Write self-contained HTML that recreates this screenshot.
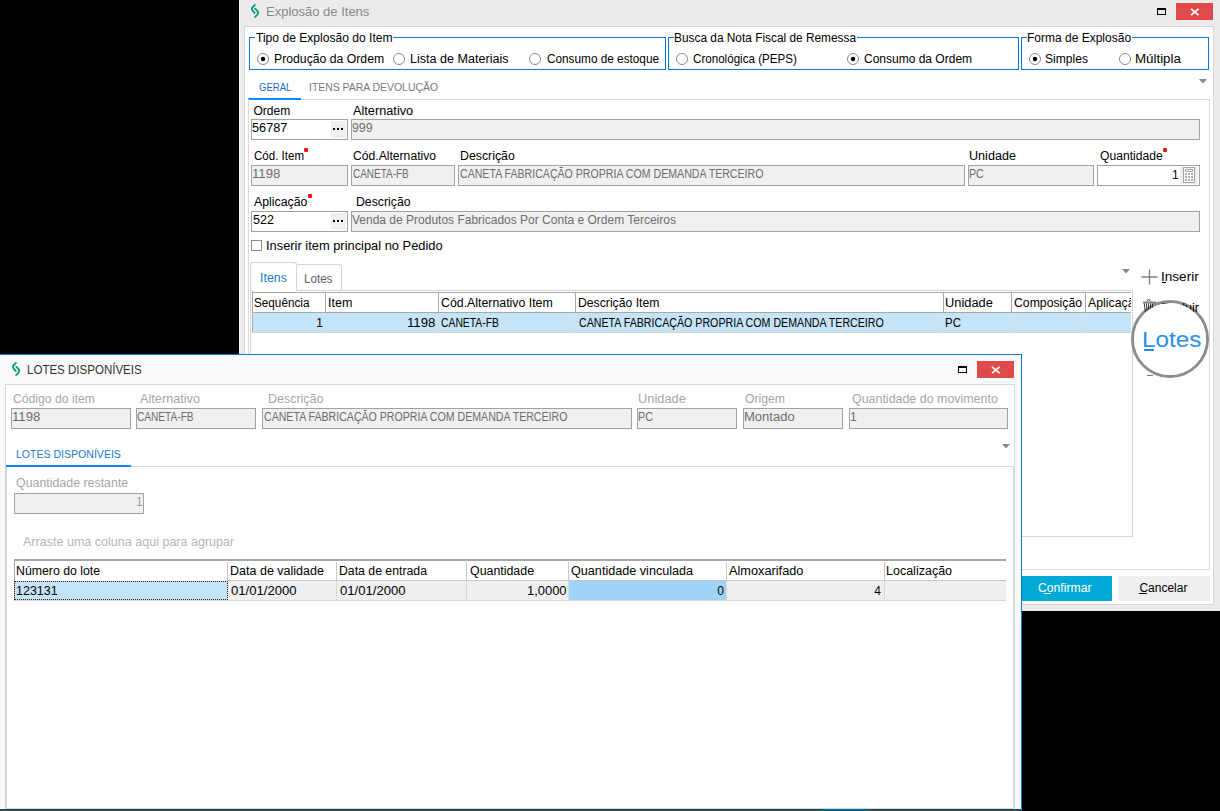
<!DOCTYPE html>
<html><head><meta charset="utf-8"><style>*{margin:0;padding:0}
html,body{width:1220px;height:811px;overflow:hidden;background:#000;position:relative}
body>div,body>svg,body>span,div>span{position:absolute}
.t{font-family:"Liberation Sans", sans-serif;white-space:nowrap;transform-origin:0 0}</style></head><body>
<div style="left:239px;top:0px;width:981px;height:611px;background:#ebebeb;"></div>
<div style="left:239px;top:0px;width:1px;height:611px;background:#f4f4f4;"></div>
<svg style="left:250px;top:3px" width="10" height="16" viewBox="0 0 10 16"><path d="M4.8 2.0 C3 3.5 1.9 4.6 1.9 6.1 C1.9 7.6 3 8.6 4.7 10.0" fill="none" stroke="#119c84" stroke-width="1.9" stroke-linecap="round"/><path d="M5.3 5.7 C7 7.1 8.2 8.2 8.2 9.8 C8.2 11.3 7 12.4 5.1 14.0" fill="none" stroke="#119c84" stroke-width="1.9" stroke-linecap="round"/></svg>
<span class="t" style="top:5px;font-size:13px;line-height:13px;color:#8a8a8a;left:266.0px;">Explosão de Itens</span>
<div style="left:1157px;top:8px;width:9px;height:7px;box-sizing:border-box;border:1.5px solid #000;border-top-width:2px;"></div>
<div style="left:1176px;top:3px;width:37px;height:17px;background:#e04a4a;"></div>
<svg style="left:1190px;top:8px" width="10" height="8" viewBox="0 0 10 8"><path d="M1 0.8 L8.6 7.2 M8.6 0.8 L1 7.2" stroke="#fff" stroke-width="1.7"/></svg>
<div style="left:244px;top:26px;width:970px;height:579px;background:#fff;box-sizing:border-box;border:1px solid #d6d6d6;"></div>
<div style="left:249px;top:37px;width:417px;height:33px;box-sizing:border-box;border:1px solid #0a78d4;"></div>
<div style="left:255px;top:33px;width:138px;height:8px;background:#fff"></div>
<span class="t" style="top:32px;font-size:12px;line-height:12px;color:#000;left:256.0px;transform:scaleX(1.007);">Tipo de Explosão do Item</span>
<div style="left:668px;top:37px;width:351px;height:33px;box-sizing:border-box;border:1px solid #0a78d4;"></div>
<div style="left:674px;top:33px;width:183px;height:8px;background:#fff"></div>
<span class="t" style="top:32px;font-size:12px;line-height:12px;color:#000;left:674.0px;transform:scaleX(0.989);">Busca da Nota Fiscal de Remessa</span>
<div style="left:1021px;top:37px;width:188px;height:33px;box-sizing:border-box;border:1px solid #0a78d4;"></div>
<div style="left:1027px;top:33px;width:105px;height:8px;background:#fff"></div>
<span class="t" style="top:32px;font-size:12px;line-height:12px;color:#000;left:1027.0px;">Forma de Explosão</span>
<svg style="left:257px;top:53px" width="12" height="12" viewBox="0 0 12 12"><circle cx="6" cy="6" r="5.5" fill="#fff" stroke="#8a8a8a" stroke-width="1"/><circle cx="6" cy="6" r="2.2" fill="#000"/></svg>
<span class="t" style="top:53px;font-size:12px;line-height:12px;color:#000;left:274.0px;transform:scaleX(1.019);">Produção da Ordem</span>
<svg style="left:393px;top:53px" width="12" height="12" viewBox="0 0 12 12"><circle cx="6" cy="6" r="5.5" fill="#fff" stroke="#8a8a8a" stroke-width="1"/></svg>
<span class="t" style="top:53px;font-size:12px;line-height:12px;color:#000;left:410.0px;transform:scaleX(1.048);">Lista de Materiais</span>
<svg style="left:529px;top:53px" width="12" height="12" viewBox="0 0 12 12"><circle cx="6" cy="6" r="5.5" fill="#fff" stroke="#8a8a8a" stroke-width="1"/></svg>
<span class="t" style="top:53px;font-size:12px;line-height:12px;color:#000;left:546.5px;transform:scaleX(0.982);">Consumo de estoque</span>
<svg style="left:676px;top:53px" width="12" height="12" viewBox="0 0 12 12"><circle cx="6" cy="6" r="5.5" fill="#fff" stroke="#8a8a8a" stroke-width="1"/></svg>
<span class="t" style="top:53px;font-size:12px;line-height:12px;color:#000;left:693.0px;transform:scaleX(0.967);">Cronológica (PEPS)</span>
<svg style="left:847px;top:53px" width="12" height="12" viewBox="0 0 12 12"><circle cx="6" cy="6" r="5.5" fill="#fff" stroke="#8a8a8a" stroke-width="1"/><circle cx="6" cy="6" r="2.2" fill="#000"/></svg>
<span class="t" style="top:53px;font-size:12px;line-height:12px;color:#000;left:864.0px;">Consumo da Ordem</span>
<svg style="left:1029px;top:53px" width="12" height="12" viewBox="0 0 12 12"><circle cx="6" cy="6" r="5.5" fill="#fff" stroke="#8a8a8a" stroke-width="1"/><circle cx="6" cy="6" r="2.2" fill="#000"/></svg>
<span class="t" style="top:53px;font-size:12px;line-height:12px;color:#000;left:1045.0px;transform:scaleX(1.007);">Simples</span>
<svg style="left:1119px;top:53px" width="12" height="12" viewBox="0 0 12 12"><circle cx="6" cy="6" r="5.5" fill="#fff" stroke="#8a8a8a" stroke-width="1"/></svg>
<span class="t" style="top:53px;font-size:12px;line-height:12px;color:#000;left:1135.4px;transform:scaleX(1.110);">Múltipla</span>
<span class="t" style="top:82px;font-size:11.5px;line-height:11.5px;color:#1a6fd0;left:258.6px;transform:scaleX(0.831);">GERAL</span>
<span class="t" style="top:82px;font-size:11px;line-height:11px;color:#7a7a7a;left:308.5px;transform:scaleX(0.948);">ITENS PARA DEVOLUÇÃO</span>
<div style="left:248px;top:99px;width:962px;height:1px;background:#d9d9d9;"></div>
<div style="left:248px;top:98px;width:53px;height:2px;background:#0a8aff;"></div>
<svg style="left:1199px;top:79px" width="8" height="5" viewBox="0 0 8 5"><path d="M0 0 H8 L4 4.5 Z" fill="#8a8a8a"/></svg>
<div style="left:248px;top:99px;width:1px;height:471px;background:#d9d9d9;"></div>
<div style="left:1209px;top:99px;width:1px;height:471px;background:#d9d9d9;"></div>
<div style="left:248px;top:569px;width:962px;height:1px;background:#d9d9d9;"></div>
<span class="t" style="top:105px;font-size:12px;line-height:12px;color:#000;left:253.5px;">Ordem</span>
<span class="t" style="top:105px;font-size:12px;line-height:12px;color:#000;left:353.3px;transform:scaleX(1.061);">Alternativo</span>
<div style="left:251px;top:119px;width:97px;height:21px;background:#ffffff;box-sizing:border-box;border:1px solid #a2a2a2;"></div>
<div style="left:331px;top:121px;width:15px;height:17px;background:#efefef;"></div>
<div style="left:333px;top:128px;width:2px;height:2px;background:#000;"></div>
<div style="left:337px;top:128px;width:2px;height:2px;background:#000;"></div>
<div style="left:341px;top:128px;width:2px;height:2px;background:#000;"></div>
<span class="t" style="top:122px;font-size:12px;line-height:12px;color:#000;left:252.4px;transform:scaleX(1.062);">56787</span>
<div style="left:351px;top:119px;width:849px;height:21px;background:#f0f0f0;box-sizing:border-box;border:1px solid #a2a2a2;"></div>
<span class="t" style="top:122px;font-size:12px;line-height:12px;color:#6d6d6d;left:352.0px;transform:scaleX(1.025);">999</span>
<span class="t" style="top:150px;font-size:12px;line-height:12px;color:#000;left:253.5px;transform:scaleX(0.962);">Cód. Item</span>
<div style="left:304px;top:148px;width:4px;height:4px;border-radius:1.2px;background:#ff0a0a"></div>
<span class="t" style="top:150px;font-size:12px;line-height:12px;color:#000;left:353.3px;transform:scaleX(1.012);">Cód.Alternativo</span>
<span class="t" style="top:150px;font-size:12px;line-height:12px;color:#000;left:459.5px;transform:scaleX(1.027);">Descrição</span>
<span class="t" style="top:150px;font-size:12px;line-height:12px;color:#000;left:969.4px;transform:scaleX(1.051);">Unidade</span>
<span class="t" style="top:150px;font-size:12px;line-height:12px;color:#000;left:1099.5px;transform:scaleX(1.011);">Quantidade</span>
<div style="left:1163px;top:147.5px;width:4px;height:4px;border-radius:1.2px;background:#ff0a0a"></div>
<div style="left:251px;top:165px;width:97px;height:21px;background:#f0f0f0;box-sizing:border-box;border:1px solid #a2a2a2;"></div>
<span class="t" style="top:168px;font-size:12px;line-height:12px;color:#6d6d6d;left:252.4px;transform:scaleX(1.100);">1198</span>
<div style="left:351px;top:165px;width:104px;height:21px;background:#f0f0f0;box-sizing:border-box;border:1px solid #a2a2a2;"></div>
<span class="t" style="top:168px;font-size:12px;line-height:12px;color:#6d6d6d;left:352.5px;transform:scaleX(0.831);">CANETA-FB</span>
<div style="left:458px;top:165px;width:507px;height:21px;background:#f0f0f0;box-sizing:border-box;border:1px solid #a2a2a2;"></div>
<span class="t" style="top:168px;font-size:12px;line-height:12px;color:#6d6d6d;left:459.7px;transform:scaleX(0.883);">CANETA FABRICAÇÃO PROPRIA COM DEMANDA TERCEIRO</span>
<div style="left:968px;top:165px;width:126px;height:21px;background:#f0f0f0;box-sizing:border-box;border:1px solid #a2a2a2;"></div>
<span class="t" style="top:168px;font-size:12px;line-height:12px;color:#6d6d6d;left:968.9px;transform:scaleX(0.887);">PC</span>
<div style="left:1097px;top:165px;width:103px;height:21px;background:#ffffff;box-sizing:border-box;border:1px solid #a2a2a2;"></div>
<span class="t" style="top:169px;font-size:12px;line-height:12px;color:#000;left:1172.0px;">1</span>
<div style="left:1180px;top:167px;width:18px;height:17px;background:#efefef;"></div>
<svg style="left:1183px;top:167px" width="12" height="16" viewBox="0 0 12 16"><rect x="0.5" y="0.5" width="11" height="15" fill="#fff" stroke="#a6a6a6"/><rect x="2.5" y="2.5" width="7" height="2" fill="none" stroke="#a6a6a6"/><g fill="#b0b0b0"><rect x="2" y="6" width="2" height="2"/><rect x="5" y="6" width="2" height="2"/><rect x="8" y="6" width="2" height="2"/><rect x="2" y="9" width="2" height="2"/><rect x="5" y="9" width="2" height="2"/><rect x="8" y="9" width="2" height="2"/><rect x="2" y="12" width="2" height="2"/><rect x="5" y="12" width="2" height="2"/><rect x="8" y="12" width="2" height="2"/></g></svg>
<span class="t" style="top:196px;font-size:12px;line-height:12px;color:#000;left:253.5px;transform:scaleX(1.025);">Aplicação</span>
<div style="left:308px;top:194px;width:4px;height:4px;border-radius:1.2px;background:#ff0a0a"></div>
<span class="t" style="top:196px;font-size:12px;line-height:12px;color:#000;left:356.0px;transform:scaleX(1.023);">Descrição</span>
<div style="left:251px;top:211px;width:97px;height:21px;background:#ffffff;box-sizing:border-box;border:1px solid #a2a2a2;"></div>
<div style="left:331px;top:213px;width:15px;height:17px;background:#efefef;"></div>
<div style="left:333px;top:220px;width:2px;height:2px;background:#000;"></div>
<div style="left:337px;top:220px;width:2px;height:2px;background:#000;"></div>
<div style="left:341px;top:220px;width:2px;height:2px;background:#000;"></div>
<span class="t" style="top:214px;font-size:12px;line-height:12px;color:#000;left:252.5px;transform:scaleX(1.042);">522</span>
<div style="left:351px;top:211px;width:849px;height:21px;background:#f0f0f0;box-sizing:border-box;border:1px solid #a2a2a2;"></div>
<span class="t" style="top:214px;font-size:12px;line-height:12px;color:#6d6d6d;left:352.0px;">Venda de Produtos Fabricados Por Conta e Ordem Terceiros</span>
<div style="left:251px;top:240px;width:11px;height:11px;background:#fff;box-sizing:border-box;border:1px solid #8a8a8a;"></div>
<span class="t" style="top:240px;font-size:12px;line-height:12px;color:#000;left:265.6px;transform:scaleX(1.072);">Inserir item principal no Pedido</span>
<div style="left:250px;top:262px;width:47px;height:29px;box-sizing:border-box;border:1px solid #d5d5d5;border-bottom:none;border-radius:3px 3px 0 0;background:#fff"></div>
<div style="left:296px;top:264px;width:46px;height:26px;box-sizing:border-box;border:1px solid #d5d5d5;border-bottom:none;border-radius:3px 3px 0 0;background:#fff"></div>
<span class="t" style="top:272px;font-size:12px;line-height:12px;color:#1a7bd0;left:260.0px;transform:scaleX(1.032);">Itens</span>
<span class="t" style="top:273px;font-size:12px;line-height:12px;color:#606060;left:304.4px;transform:scaleX(0.968);">Lotes</span>
<svg style="left:1122px;top:269px" width="8" height="5" viewBox="0 0 8 5"><path d="M0 0 H8 L4 4.5 Z" fill="#8a8a8a"/></svg>
<div style="left:296px;top:290px;width:837px;height:1px;background:#d5d5d5;"></div>
<div style="left:250px;top:290px;width:1px;height:247px;background:#d5d5d5;"></div>
<div style="left:1132px;top:290px;width:1px;height:247px;background:#d5d5d5;"></div>
<div style="left:250px;top:536px;width:883px;height:1px;background:#d5d5d5;"></div>
<div style="left:252px;top:291px;width:879px;height:22px;background:#fff;"></div>
<div style="left:252px;top:292px;width:879px;height:1px;background:#a8a8a8;"></div>
<div style="left:252px;top:312px;width:879px;height:1px;background:#a8a8a8;"></div>
<div style="left:252px;top:291px;width:1px;height:42px;background:#a8a8a8;"></div>
<div style="left:253px;top:313px;width:878px;height:19px;background:#c5e4f7;"></div>
<div style="left:252px;top:332px;width:879px;height:1px;background:#d2d2d2;"></div>
<div style="left:325px;top:293px;width:1px;height:19px;background:#a8a8a8;"></div>
<div style="left:325px;top:313px;width:1px;height:19px;background:#d0dde6;"></div>
<div style="left:438px;top:293px;width:1px;height:19px;background:#a8a8a8;"></div>
<div style="left:438px;top:313px;width:1px;height:19px;background:#d0dde6;"></div>
<div style="left:575px;top:293px;width:1px;height:19px;background:#a8a8a8;"></div>
<div style="left:575px;top:313px;width:1px;height:19px;background:#d0dde6;"></div>
<div style="left:943px;top:293px;width:1px;height:19px;background:#a8a8a8;"></div>
<div style="left:943px;top:313px;width:1px;height:19px;background:#d0dde6;"></div>
<div style="left:1011px;top:293px;width:1px;height:19px;background:#a8a8a8;"></div>
<div style="left:1011px;top:313px;width:1px;height:19px;background:#d0dde6;"></div>
<div style="left:1085px;top:293px;width:1px;height:19px;background:#a8a8a8;"></div>
<div style="left:1085px;top:313px;width:1px;height:19px;background:#d0dde6;"></div>
<span class="t" style="top:297px;font-size:12px;line-height:12px;color:#000;left:254.3px;transform:scaleX(0.977);">Sequência</span>
<span class="t" style="top:297px;font-size:12px;line-height:12px;color:#000;left:327.5px;transform:scaleX(1.045);">Item</span>
<span class="t" style="top:297px;font-size:12px;line-height:12px;color:#000;left:441.0px;transform:scaleX(1.028);">Cód.Alternativo Item</span>
<span class="t" style="top:297px;font-size:12px;line-height:12px;color:#000;left:577.8px;transform:scaleX(1.018);">Descrição Item</span>
<span class="t" style="top:297px;font-size:12px;line-height:12px;color:#000;left:944.9px;transform:scaleX(1.070);">Unidade</span>
<span class="t" style="top:297px;font-size:12px;line-height:12px;color:#000;left:1014.0px;transform:scaleX(1.021);">Composição</span>
<div style="left:1086px;top:293px;width:45px;height:18px;overflow:hidden">
<span class="t" style="top:4px;font-size:12px;line-height:12px;color:#000;left:2.0px;transform:scaleX(1.025);">Aplicação</span>
</div>
<span class="t" style="top:317px;font-size:12px;line-height:12px;color:#000;left:316.2px;">1</span>
<span class="t" style="top:317px;font-size:12px;line-height:12px;color:#000;left:406.7px;transform:scaleX(1.100);">1198</span>
<span class="t" style="top:317px;font-size:12px;line-height:12px;color:#000;left:441.0px;transform:scaleX(0.863);">CANETA-FB</span>
<span class="t" style="top:317px;font-size:12px;line-height:12px;color:#000;left:578.8px;transform:scaleX(0.887);">CANETA FABRICAÇÃO PROPRIA COM DEMANDA TERCEIRO</span>
<span class="t" style="top:317px;font-size:12px;line-height:12px;color:#000;left:945.0px;transform:scaleX(0.953);">PC</span>
<svg style="left:1141px;top:269px" width="17" height="16" viewBox="0 0 17 16"><path d="M0.5 8 H16.5 M8.5 0.5 V15.5" stroke="#7c7c8c" stroke-width="1.3"/></svg>
<span class="t" style="top:271px;font-size:12px;line-height:12px;color:#000;left:1161.2px;transform:scaleX(1.131);">Inserir</span>
<div style="left:1162px;top:282px;width:4px;height:1px;background:#000;"></div>
<svg style="left:1129px;top:298px" width="82" height="82" viewBox="0 0 82 82"><circle cx="41" cy="41" r="37.5" fill="none" stroke="#8c8c8c" stroke-width="3"/></svg>
<svg style="left:1143px;top:299px" width="14" height="14" viewBox="0 0 14 14"><path d="M4 2.2 Q4 0.6 5.5 0.6 Q7 0.6 7 2.2" fill="none" stroke="#333" stroke-width="0.9"/><rect x="0" y="2.5" width="13" height="2" fill="#7a8090"/><path d="M1.3 4.5 L2.3 13 M3.5 4.5 L4 12 M5.5 4.5 L5.8 11 M7.5 4.5 L7.6 10 M9.5 4.5 L9.4 9" fill="none" stroke="#222" stroke-width="0.9"/></svg>
<span class="t" style="top:302px;font-size:12px;line-height:12px;color:#000;left:1160.9px;transform:scaleX(1.057);">Excluir</span>
<svg style="left:1129px;top:298px" width="82" height="82" viewBox="0 0 82 82"><circle cx="41" cy="41" r="36" fill="#fff"/></svg>
<span class="t" style="top:329px;font-size:22px;line-height:22px;color:#2a90ea;left:1141.5px;transform:scaleX(1.104);">Lotes</span>
<div style="left:1144px;top:349px;width:10px;height:2px;background:#1a8ce8;"></div>
<div style="left:1147px;top:375px;width:6px;height:1px;background:#777;"></div>
<div style="left:1000px;top:576px;width:112px;height:25px;background:#00a9d5;"></div>
<span class="t" style="top:582px;font-size:12px;line-height:12px;color:#fff;left:1037.7px;transform:scaleX(1.015);">Confirmar</span>
<div style="left:1044px;top:593px;width:7px;height:1px;background:#fff;"></div>
<div style="left:1118px;top:576px;width:92px;height:25px;background:#efefef;"></div>
<span class="t" style="top:582px;font-size:12px;line-height:12px;color:#000;left:1139.4px;">Cancelar</span>
<div style="left:1139px;top:593px;width:8px;height:1px;background:#000;"></div>
<div style="left:0px;top:354px;width:1022px;height:457px;background:#f9f9f9;"></div>
<div style="left:0px;top:354px;width:1022px;height:1px;background:#0a78d4;"></div>
<div style="left:1021px;top:354px;width:1px;height:457px;background:#0a78d4;"></div>
<div style="left:0px;top:809px;width:1021px;height:2px;background:#2a474d;"></div>
<div style="left:821px;top:809px;width:48px;height:2px;background:#0b6580;"></div>
<svg style="left:11px;top:361px" width="10" height="16" viewBox="0 0 10 16"><path d="M4.8 2.0 C3 3.5 1.9 4.6 1.9 6.1 C1.9 7.6 3 8.6 4.7 10.0" fill="none" stroke="#119c84" stroke-width="1.9" stroke-linecap="round"/><path d="M5.3 5.7 C7 7.1 8.2 8.2 8.2 9.8 C8.2 11.3 7 12.4 5.1 14.0" fill="none" stroke="#119c84" stroke-width="1.9" stroke-linecap="round"/></svg>
<span class="t" style="top:364px;font-size:12px;line-height:12px;color:#333;left:27.2px;transform:scaleX(0.961);">LOTES DISPONÍVEIS</span>
<div style="left:958px;top:366px;width:9px;height:7px;box-sizing:border-box;border:1.5px solid #000;border-top-width:2px;"></div>
<div style="left:977px;top:361px;width:37px;height:17px;background:#e04a4a;"></div>
<svg style="left:991px;top:366px" width="10" height="8" viewBox="0 0 10 8"><path d="M1 0.8 L8.6 7.2 M8.6 0.8 L1 7.2" stroke="#fff" stroke-width="1.7"/></svg>
<div style="left:5px;top:384px;width:1010px;height:425px;background:#fff;box-sizing:border-box;border:1px solid #d6d6d6;"></div>
<div style="left:1013px;top:467px;width:1px;height:342px;background:#d6d6d6;"></div>
<div style="left:6px;top:467px;width:1px;height:342px;background:#d6d6d6;"></div>
<span class="t" style="top:393px;font-size:12px;line-height:12px;color:#a6a6a6;left:13.1px;transform:scaleX(1.016);">Código do item</span>
<span class="t" style="top:393px;font-size:12px;line-height:12px;color:#a6a6a6;left:140.2px;transform:scaleX(1.059);">Alternativo</span>
<span class="t" style="top:393px;font-size:12px;line-height:12px;color:#a6a6a6;left:267.8px;transform:scaleX(1.040);">Descrição</span>
<span class="t" style="top:393px;font-size:12px;line-height:12px;color:#a6a6a6;left:637.9px;transform:scaleX(1.070);">Unidade</span>
<span class="t" style="top:393px;font-size:12px;line-height:12px;color:#a6a6a6;left:745.0px;transform:scaleX(1.015);">Origem</span>
<span class="t" style="top:393px;font-size:12px;line-height:12px;color:#a6a6a6;left:852.0px;transform:scaleX(1.036);">Quantidade do movimento</span>
<div style="left:11px;top:408px;width:120px;height:21px;background:#f0f0f0;box-sizing:border-box;border:1px solid #a2a2a2;"></div>
<div style="left:136px;top:408px;width:120px;height:21px;background:#f0f0f0;box-sizing:border-box;border:1px solid #a2a2a2;"></div>
<div style="left:262px;top:408px;width:370px;height:21px;background:#f0f0f0;box-sizing:border-box;border:1px solid #a2a2a2;"></div>
<div style="left:637px;top:408px;width:100px;height:21px;background:#f0f0f0;box-sizing:border-box;border:1px solid #a2a2a2;"></div>
<div style="left:743px;top:408px;width:100px;height:21px;background:#f0f0f0;box-sizing:border-box;border:1px solid #a2a2a2;"></div>
<div style="left:849px;top:408px;width:159px;height:21px;background:#f0f0f0;box-sizing:border-box;border:1px solid #a2a2a2;"></div>
<span class="t" style="top:411px;font-size:12px;line-height:12px;color:#6d6d6d;left:11.9px;transform:scaleX(1.100);">1198</span>
<span class="t" style="top:411px;font-size:12px;line-height:12px;color:#6d6d6d;left:137.3px;transform:scaleX(0.843);">CANETA-FB</span>
<span class="t" style="top:411px;font-size:12px;line-height:12px;color:#6d6d6d;left:263.5px;transform:scaleX(0.883);">CANETA FABRICAÇÃO PROPRIA COM DEMANDA TERCEIRO</span>
<span class="t" style="top:411px;font-size:12px;line-height:12px;color:#6d6d6d;left:638.1px;transform:scaleX(0.893);">PC</span>
<span class="t" style="top:411px;font-size:12px;line-height:12px;color:#6d6d6d;left:743.9px;transform:scaleX(1.084);">Montado</span>
<span class="t" style="top:411px;font-size:12px;line-height:12px;color:#6d6d6d;left:850.0px;">1</span>
<span class="t" style="top:449px;font-size:11.5px;line-height:11.5px;color:#1a7bd0;left:15.5px;transform:scaleX(0.917);">LOTES DISPONÍVEIS</span>
<div style="left:5px;top:466px;width:1010px;height:1px;background:#d9d9d9;"></div>
<div style="left:6px;top:465px;width:125px;height:2px;background:#0a8aff;"></div>
<svg style="left:1002px;top:444px" width="8" height="5" viewBox="0 0 8 5"><path d="M0 0 H8 L4 4.5 Z" fill="#8a8a8a"/></svg>
<span class="t" style="top:477px;font-size:12px;line-height:12px;color:#a6a6a6;left:16.4px;transform:scaleX(1.032);">Quantidade restante</span>
<div style="left:14px;top:493px;width:130px;height:21px;background:#f0f0f0;box-sizing:border-box;border:1px solid #a2a2a2;"></div>
<span class="t" style="top:496px;font-size:12px;line-height:12px;color:#9a9a9a;left:136.0px;">1</span>
<span class="t" style="top:536px;font-size:12px;line-height:12px;color:#b5b5b5;left:22.5px;transform:scaleX(1.045);">Arraste uma coluna aqui para agrupar</span>
<div style="left:14px;top:559px;width:992px;height:22px;background:#fff;"></div>
<div style="left:14px;top:559px;width:992px;height:2px;background:#a8a8a8;"></div>
<div style="left:15px;top:581px;width:991px;height:19px;background:#efeff1;"></div>
<div style="left:227px;top:580px;width:779px;height:1px;background:#c8c8c8;"></div>
<div style="left:14px;top:600px;width:992px;height:1px;background:#d8d8d8;"></div>
<div style="left:14px;top:559px;width:1px;height:42px;background:#a8a8a8;"></div>
<div style="left:227px;top:562px;width:1px;height:18px;background:#c8c8c8;"></div>
<div style="left:227px;top:581px;width:1px;height:19px;background:#d8d8d8;"></div>
<div style="left:336px;top:562px;width:1px;height:18px;background:#c8c8c8;"></div>
<div style="left:336px;top:581px;width:1px;height:19px;background:#d8d8d8;"></div>
<div style="left:466px;top:562px;width:1px;height:18px;background:#c8c8c8;"></div>
<div style="left:466px;top:581px;width:1px;height:19px;background:#d8d8d8;"></div>
<div style="left:568px;top:562px;width:1px;height:18px;background:#c8c8c8;"></div>
<div style="left:568px;top:581px;width:1px;height:19px;background:#d8d8d8;"></div>
<div style="left:726px;top:562px;width:1px;height:18px;background:#c8c8c8;"></div>
<div style="left:726px;top:581px;width:1px;height:19px;background:#d8d8d8;"></div>
<div style="left:884px;top:562px;width:1px;height:18px;background:#c8c8c8;"></div>
<div style="left:884px;top:581px;width:1px;height:19px;background:#d8d8d8;"></div>
<div style="left:569px;top:581px;width:157px;height:19px;background:#9fd3f7;"></div>
<div style="left:15px;top:581px;width:212px;height:19px;background:#c5e4f7;"></div>
<div style="left:14px;top:581px;width:214px;height:19px;box-sizing:border-box;border:1px dotted #222"></div>
<span class="t" style="top:565px;font-size:12px;line-height:12px;color:#000;left:16.4px;transform:scaleX(1.025);">Número do lote</span>
<span class="t" style="top:565px;font-size:12px;line-height:12px;color:#000;left:229.5px;transform:scaleX(1.043);">Data de validade</span>
<span class="t" style="top:565px;font-size:12px;line-height:12px;color:#000;left:338.7px;transform:scaleX(1.022);">Data de entrada</span>
<span class="t" style="top:565px;font-size:12px;line-height:12px;color:#000;left:469.8px;transform:scaleX(1.032);">Quantidade</span>
<span class="t" style="top:565px;font-size:12px;line-height:12px;color:#000;left:571.0px;transform:scaleX(1.052);">Quantidade vinculada</span>
<span class="t" style="top:565px;font-size:12px;line-height:12px;color:#000;left:729.2px;transform:scaleX(1.063);">Almoxarifado</span>
<span class="t" style="top:565px;font-size:12px;line-height:12px;color:#000;left:886.2px;transform:scaleX(1.042);">Localização</span>
<span class="t" style="top:585px;font-size:12px;line-height:12px;color:#000;left:15.8px;transform:scaleX(1.041);">123131</span>
<span class="t" style="top:585px;font-size:12px;line-height:12px;color:#000;left:230.5px;transform:scaleX(1.092);">01/01/2000</span>
<span class="t" style="top:585px;font-size:12px;line-height:12px;color:#000;left:339.7px;transform:scaleX(1.092);">01/01/2000</span>
<span class="t" style="top:585px;font-size:12px;line-height:12px;color:#000;left:527.1px;transform:scaleX(1.077);">1,0000</span>
<span class="t" style="top:585px;font-size:12px;line-height:12px;color:#000;left:717.3px;">0</span>
<span class="t" style="top:585px;font-size:12px;line-height:12px;color:#000;left:874.3px;">4</span>
</body></html>
